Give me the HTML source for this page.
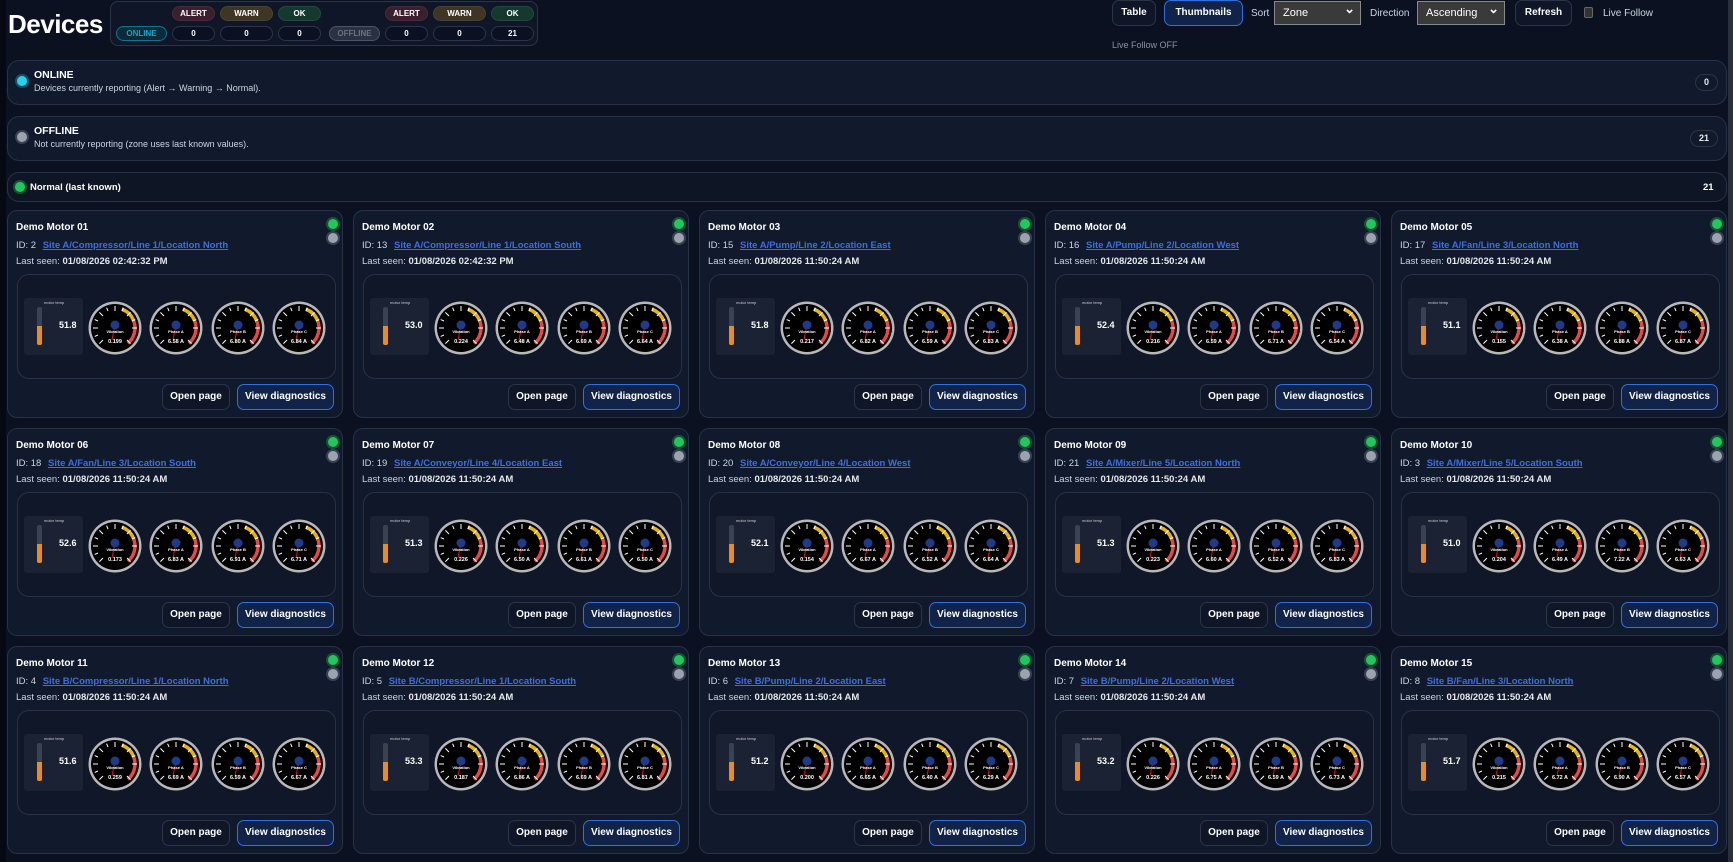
<!DOCTYPE html>
<html><head><meta charset="utf-8"><style>
*{box-sizing:border-box;margin:0;padding:0}
body{width:1733px;height:862px;overflow:hidden;background:#0b1120;font-family:"Liberation Sans",sans-serif;color:#e5e7eb;position:relative}
.ab{position:absolute}
.strip{left:0;top:0;width:6px;height:862px;background:#060912}
.sb{right:0;top:0;width:5px;height:862px;background:#2a2f3a}
h1{position:absolute;left:8px;top:9px;font-size:26px;font-weight:bold;color:#fff;letter-spacing:-0.5px}
.sum{left:110px;top:1px;width:428px;height:45px;border:1px solid #2a3548;border-radius:8px;background:#0f1628}
.pill{position:absolute;height:15px;border-radius:8px;font-size:8px;font-weight:bold;text-align:center;line-height:14px;color:#fff}
.pa{background:#3a1f2c;border:1px solid #4a2a38}.pw{background:#3f3524;border:1px solid #4d4230}.po{background:#16392f;border:1px solid #1f4a3c}
.pn{background:#0b1120;border:1px solid #2a3548}
.btn{position:absolute;border:1px solid #2a3548;border-radius:7px;background:#0f1628;color:#fff;font-size:10px;font-weight:bold;text-align:center}
.btn.hl{border-color:#2f6fe0;background:#12234a}
.sel{position:absolute;height:24px;background:#3a3a3a;border:1px solid #888;color:#fff;font-size:11px;line-height:22px;padding-left:8px}
.sel:after{content:"⌄";position:absolute;right:5px;top:-4px;font-size:13px;font-weight:bold}
.lbl{position:absolute;font-size:10px;color:#cbd5e1}
.panel{position:absolute;left:7px;width:1720px;border:1px solid #263247;border-radius:12px;background:#111a2c}
.dot{position:absolute;border-radius:50%}
.pt{position:absolute;left:34px;font-size:10.5px;font-weight:bold;color:#fff}
.pd{position:absolute;left:34px;font-size:9px;color:#cbd5e1}
.cnt{position:absolute;border:1px solid #2a3548;border-radius:9px;font-size:9px;font-weight:bold;text-align:center;line-height:15px;height:17px}
.card{position:absolute;width:336px;height:208px;border:1px solid #263247;border-radius:10px;background:#111a2c}
.card .t{position:absolute;left:8px;top:11px;font-size:10px;font-weight:bold;color:#fff}
.card .id{position:absolute;left:8px;top:29px;font-size:9.5px;color:#cbd5e1}
.card .id a{color:#3d6fdc;font-weight:bold;text-decoration:underline;margin-left:4px}
.card .ls{position:absolute;left:8px;top:45px;font-size:9.5px;color:#cbd5e1}
.card .ls b{color:#e5e7eb}
.card .g1{position:absolute;left:320px;top:8px;width:10px;height:10px;border-radius:50%;background:#22c55e;box-shadow:0 0 0 2px #14532d}
.card .g2{position:absolute;left:320px;top:22px;width:10px;height:10px;border-radius:50%;background:#9ca3af;box-shadow:0 0 0 2px #374151}
.card .in{position:absolute;left:9px;top:63px;width:319px;height:105px;border:1px solid #263247;border-radius:12px;background:#0f1728}
.card .th{position:absolute;left:6px;top:23px;width:59px;height:57px;background:#1a2234;border-radius:3px}
.card .th i{position:absolute;left:13px;top:9px;width:5px;height:38px;background:#3a4150;border-radius:2px}
.card .th i:after{content:"";position:absolute;left:0;bottom:0;width:5px;height:19px;background:#f08a1c;border-radius:0 0 2px 2px}
.card .th b{position:absolute;left:35px;top:22px;font-size:9px;color:#fff}
.card .th s{position:absolute;left:20px;top:2px;font-size:4px;color:#ccc;text-decoration:none}
.card svg{position:absolute;left:60px;top:23px}
.card .b1{position:absolute;left:154px;top:173px;width:68px;height:26px;line-height:24px}
.card .b2{position:absolute;left:229px;top:173px;width:97px;height:26px;line-height:24px}
</style></head><body>
<svg width="0" height="0" style="position:absolute"><defs>
<g id="gz">
<circle r="26.5" fill="#b8b8b8"/><circle r="24" fill="#000"/>
<path d="M6.8 -18.8A20 20 0 0 1 18.8 -6.8" stroke="#eab308" stroke-width="3.5" fill="none"/>
<path d="M18.8 -6.8A20 20 0 0 1 12.9 15.3" stroke="#ef4444" stroke-width="3.5" fill="none"/>
<g stroke="#fff" stroke-width="1">
<path d="M0 -22V-17M-15.6 15.6L-12 12M15.6 15.6L12 12M-22 0H-17M22 0H17M-15.6 -15.6L-12 -12M15.6 -15.6L12 -12M-8.4 -20.3L-7 -17M8.4 -20.3L7 -17M-20.3 -8.4L-17 -7M20.3 -8.4L17 -7M-20.3 8.4L-17 7"/>
</g>
<line x1="0" y1="-3" x2="-3" y2="12" stroke="#d11" stroke-width="1"/>
<circle cy="-3" r="4.5" fill="#1e3a8a"/>
</g></defs></svg>
<div class="ab strip"></div><div class="ab sb"></div>
<h1>Devices</h1>
<div class="ab sum">
<div class="pill pa" style="left:61px;top:4px;width:43px">ALERT</div>
<div class="pill pw" style="left:109px;top:4px;width:53px">WARN</div>
<div class="pill po" style="left:167px;top:4px;width:43px">OK</div>
<div class="pill pa" style="left:274px;top:4px;width:43px">ALERT</div>
<div class="pill pw" style="left:322px;top:4px;width:53px">WARN</div>
<div class="pill po" style="left:380px;top:4px;width:43px">OK</div>
<div class="pill" style="left:5px;top:24px;width:51px;border:1px solid #0e7490;background:#0c2a3a;color:#0ea5c6">ONLINE</div>
<div class="pill pn" style="left:61px;top:24px;width:43px">0</div>
<div class="pill pn" style="left:109px;top:24px;width:53px">0</div>
<div class="pill pn" style="left:167px;top:24px;width:43px">0</div>
<div class="pill" style="left:218px;top:24px;width:51px;border:1px solid #4b5563;background:#2a3140;color:#6b7280">OFFLINE</div>
<div class="pill pn" style="left:274px;top:24px;width:43px">0</div>
<div class="pill pn" style="left:322px;top:24px;width:53px">0</div>
<div class="pill pn" style="left:380px;top:24px;width:43px">21</div>
</div>
<div class="btn" style="left:1112px;top:0;width:44px;height:26px;line-height:24px">Table</div>
<div class="btn hl" style="left:1164px;top:0;width:79px;height:26px;line-height:24px">Thumbnails</div>
<div class="lbl" style="left:1251px;top:8px">Sort</div>
<div class="sel" style="left:1274px;top:1px;width:87px">Zone</div>
<div class="lbl" style="left:1370px;top:8px">Direction</div>
<div class="sel" style="left:1417px;top:1px;width:88px">Ascending</div>
<div class="btn" style="left:1515px;top:0;width:57px;height:26px;line-height:24px">Refresh</div>
<div class="ab" style="left:1584px;top:7px;width:9px;height:11px;border:1px solid #666;border-radius:2px;background:#333"></div>
<div class="lbl" style="left:1603px;top:8px">Live Follow</div>
<div class="lbl" style="left:1112px;top:40px;font-size:9px;color:#8b93a1">Live Follow OFF</div>

<div class="panel" style="top:60px;height:45px">
<div class="dot" style="left:9px;top:15px;width:10px;height:10px;background:#22d3ee;box-shadow:0 0 0 2px #164e63"></div>
<div class="pt" style="left:26px;top:8px">ONLINE</div>
<div class="pd" style="left:26px;top:22px">Devices currently reporting (Alert → Warning → Normal).</div>
<div class="cnt" style="left:1687px;top:13px;width:23px">0</div>
</div>
<div class="panel" style="top:116px;height:45px">
<div class="dot" style="left:9px;top:15px;width:10px;height:10px;background:#9ca3af;box-shadow:0 0 0 2px #374151"></div>
<div class="pt" style="left:26px;top:8px">OFFLINE</div>
<div class="pd" style="left:26px;top:22px">Not currently reporting (zone uses last known values).</div>
<div class="cnt" style="left:1682px;top:13px;width:28px">21</div>
</div>
<div class="panel" style="top:172px;height:30px;background:#0e1524">
<div class="dot" style="left:7px;top:9px;width:10px;height:10px;background:#22c55e;box-shadow:0 0 0 2px #14532d"></div>
<div class="pt" style="left:22px;top:9px;font-size:9.5px">Normal (last known)</div>
<div class="pt" style="left:1695px;top:9px;font-size:9.5px">21</div>
</div>

<div class="card" style="left:7px;top:210px"><div class="t">Demo Motor 01</div><div class="id">ID: 2 <a>Site A/Compressor/Line 1/Location North</a></div><div class="ls">Last seen: <b>01/08/2026 02:42:32 PM</b></div><i class="g1"></i><i class="g2"></i><div class="in"><div class="th"><s>motor temp</s><i></i><b>51.8</b></div><svg width="250" height="60"><g font-family="Liberation Sans" font-weight="bold" fill="#fff" text-anchor="middle"><use href="#gz" x="37" y="30"/><text x="37" y="35" font-size="4">Vibration</text><text x="37" y="45" font-size="5.5">0.199</text><use href="#gz" x="98" y="30"/><text x="98" y="35" font-size="4">Phase A</text><text x="98" y="45" font-size="5.5">6.58 A</text><use href="#gz" x="160" y="30"/><text x="160" y="35" font-size="4">Phase B</text><text x="160" y="45" font-size="5.5">6.80 A</text><use href="#gz" x="221" y="30"/><text x="221" y="35" font-size="4">Phase C</text><text x="221" y="45" font-size="5.5">6.84 A</text></g></svg></div><span class="btn b1">Open page</span><span class="btn hl b2">View diagnostics</span></div>

<div class="card" style="left:353px;top:210px"><div class="t">Demo Motor 02</div><div class="id">ID: 13 <a>Site A/Compressor/Line 1/Location South</a></div><div class="ls">Last seen: <b>01/08/2026 02:42:32 PM</b></div><i class="g1"></i><i class="g2"></i><div class="in"><div class="th"><s>motor temp</s><i></i><b>53.0</b></div><svg width="250" height="60"><g font-family="Liberation Sans" font-weight="bold" fill="#fff" text-anchor="middle"><use href="#gz" x="37" y="30"/><text x="37" y="35" font-size="4">Vibration</text><text x="37" y="45" font-size="5.5">0.224</text><use href="#gz" x="98" y="30"/><text x="98" y="35" font-size="4">Phase A</text><text x="98" y="45" font-size="5.5">6.48 A</text><use href="#gz" x="160" y="30"/><text x="160" y="35" font-size="4">Phase B</text><text x="160" y="45" font-size="5.5">6.69 A</text><use href="#gz" x="221" y="30"/><text x="221" y="35" font-size="4">Phase C</text><text x="221" y="45" font-size="5.5">6.64 A</text></g></svg></div><span class="btn b1">Open page</span><span class="btn hl b2">View diagnostics</span></div>

<div class="card" style="left:699px;top:210px"><div class="t">Demo Motor 03</div><div class="id">ID: 15 <a>Site A/Pump/Line 2/Location East</a></div><div class="ls">Last seen: <b>01/08/2026 11:50:24 AM</b></div><i class="g1"></i><i class="g2"></i><div class="in"><div class="th"><s>motor temp</s><i></i><b>51.8</b></div><svg width="250" height="60"><g font-family="Liberation Sans" font-weight="bold" fill="#fff" text-anchor="middle"><use href="#gz" x="37" y="30"/><text x="37" y="35" font-size="4">Vibration</text><text x="37" y="45" font-size="5.5">0.217</text><use href="#gz" x="98" y="30"/><text x="98" y="35" font-size="4">Phase A</text><text x="98" y="45" font-size="5.5">6.82 A</text><use href="#gz" x="160" y="30"/><text x="160" y="35" font-size="4">Phase B</text><text x="160" y="45" font-size="5.5">6.59 A</text><use href="#gz" x="221" y="30"/><text x="221" y="35" font-size="4">Phase C</text><text x="221" y="45" font-size="5.5">6.83 A</text></g></svg></div><span class="btn b1">Open page</span><span class="btn hl b2">View diagnostics</span></div>

<div class="card" style="left:1045px;top:210px"><div class="t">Demo Motor 04</div><div class="id">ID: 16 <a>Site A/Pump/Line 2/Location West</a></div><div class="ls">Last seen: <b>01/08/2026 11:50:24 AM</b></div><i class="g1"></i><i class="g2"></i><div class="in"><div class="th"><s>motor temp</s><i></i><b>52.4</b></div><svg width="250" height="60"><g font-family="Liberation Sans" font-weight="bold" fill="#fff" text-anchor="middle"><use href="#gz" x="37" y="30"/><text x="37" y="35" font-size="4">Vibration</text><text x="37" y="45" font-size="5.5">0.216</text><use href="#gz" x="98" y="30"/><text x="98" y="35" font-size="4">Phase A</text><text x="98" y="45" font-size="5.5">6.59 A</text><use href="#gz" x="160" y="30"/><text x="160" y="35" font-size="4">Phase B</text><text x="160" y="45" font-size="5.5">6.71 A</text><use href="#gz" x="221" y="30"/><text x="221" y="35" font-size="4">Phase C</text><text x="221" y="45" font-size="5.5">6.54 A</text></g></svg></div><span class="btn b1">Open page</span><span class="btn hl b2">View diagnostics</span></div>

<div class="card" style="left:1391px;top:210px"><div class="t">Demo Motor 05</div><div class="id">ID: 17 <a>Site A/Fan/Line 3/Location North</a></div><div class="ls">Last seen: <b>01/08/2026 11:50:24 AM</b></div><i class="g1"></i><i class="g2"></i><div class="in"><div class="th"><s>motor temp</s><i></i><b>51.1</b></div><svg width="250" height="60"><g font-family="Liberation Sans" font-weight="bold" fill="#fff" text-anchor="middle"><use href="#gz" x="37" y="30"/><text x="37" y="35" font-size="4">Vibration</text><text x="37" y="45" font-size="5.5">0.155</text><use href="#gz" x="98" y="30"/><text x="98" y="35" font-size="4">Phase A</text><text x="98" y="45" font-size="5.5">6.38 A</text><use href="#gz" x="160" y="30"/><text x="160" y="35" font-size="4">Phase B</text><text x="160" y="45" font-size="5.5">6.88 A</text><use href="#gz" x="221" y="30"/><text x="221" y="35" font-size="4">Phase C</text><text x="221" y="45" font-size="5.5">6.87 A</text></g></svg></div><span class="btn b1">Open page</span><span class="btn hl b2">View diagnostics</span></div>

<div class="card" style="left:7px;top:428px"><div class="t">Demo Motor 06</div><div class="id">ID: 18 <a>Site A/Fan/Line 3/Location South</a></div><div class="ls">Last seen: <b>01/08/2026 11:50:24 AM</b></div><i class="g1"></i><i class="g2"></i><div class="in"><div class="th"><s>motor temp</s><i></i><b>52.6</b></div><svg width="250" height="60"><g font-family="Liberation Sans" font-weight="bold" fill="#fff" text-anchor="middle"><use href="#gz" x="37" y="30"/><text x="37" y="35" font-size="4">Vibration</text><text x="37" y="45" font-size="5.5">0.173</text><use href="#gz" x="98" y="30"/><text x="98" y="35" font-size="4">Phase A</text><text x="98" y="45" font-size="5.5">6.83 A</text><use href="#gz" x="160" y="30"/><text x="160" y="35" font-size="4">Phase B</text><text x="160" y="45" font-size="5.5">6.91 A</text><use href="#gz" x="221" y="30"/><text x="221" y="35" font-size="4">Phase C</text><text x="221" y="45" font-size="5.5">6.71 A</text></g></svg></div><span class="btn b1">Open page</span><span class="btn hl b2">View diagnostics</span></div>

<div class="card" style="left:353px;top:428px"><div class="t">Demo Motor 07</div><div class="id">ID: 19 <a>Site A/Conveyor/Line 4/Location East</a></div><div class="ls">Last seen: <b>01/08/2026 11:50:24 AM</b></div><i class="g1"></i><i class="g2"></i><div class="in"><div class="th"><s>motor temp</s><i></i><b>51.3</b></div><svg width="250" height="60"><g font-family="Liberation Sans" font-weight="bold" fill="#fff" text-anchor="middle"><use href="#gz" x="37" y="30"/><text x="37" y="35" font-size="4">Vibration</text><text x="37" y="45" font-size="5.5">0.226</text><use href="#gz" x="98" y="30"/><text x="98" y="35" font-size="4">Phase A</text><text x="98" y="45" font-size="5.5">6.50 A</text><use href="#gz" x="160" y="30"/><text x="160" y="35" font-size="4">Phase B</text><text x="160" y="45" font-size="5.5">6.61 A</text><use href="#gz" x="221" y="30"/><text x="221" y="35" font-size="4">Phase C</text><text x="221" y="45" font-size="5.5">6.50 A</text></g></svg></div><span class="btn b1">Open page</span><span class="btn hl b2">View diagnostics</span></div>

<div class="card" style="left:699px;top:428px"><div class="t">Demo Motor 08</div><div class="id">ID: 20 <a>Site A/Conveyor/Line 4/Location West</a></div><div class="ls">Last seen: <b>01/08/2026 11:50:24 AM</b></div><i class="g1"></i><i class="g2"></i><div class="in"><div class="th"><s>motor temp</s><i></i><b>52.1</b></div><svg width="250" height="60"><g font-family="Liberation Sans" font-weight="bold" fill="#fff" text-anchor="middle"><use href="#gz" x="37" y="30"/><text x="37" y="35" font-size="4">Vibration</text><text x="37" y="45" font-size="5.5">0.154</text><use href="#gz" x="98" y="30"/><text x="98" y="35" font-size="4">Phase A</text><text x="98" y="45" font-size="5.5">6.67 A</text><use href="#gz" x="160" y="30"/><text x="160" y="35" font-size="4">Phase B</text><text x="160" y="45" font-size="5.5">6.52 A</text><use href="#gz" x="221" y="30"/><text x="221" y="35" font-size="4">Phase C</text><text x="221" y="45" font-size="5.5">6.64 A</text></g></svg></div><span class="btn b1">Open page</span><span class="btn hl b2">View diagnostics</span></div>

<div class="card" style="left:1045px;top:428px"><div class="t">Demo Motor 09</div><div class="id">ID: 21 <a>Site A/Mixer/Line 5/Location North</a></div><div class="ls">Last seen: <b>01/08/2026 11:50:24 AM</b></div><i class="g1"></i><i class="g2"></i><div class="in"><div class="th"><s>motor temp</s><i></i><b>51.3</b></div><svg width="250" height="60"><g font-family="Liberation Sans" font-weight="bold" fill="#fff" text-anchor="middle"><use href="#gz" x="37" y="30"/><text x="37" y="35" font-size="4">Vibration</text><text x="37" y="45" font-size="5.5">0.223</text><use href="#gz" x="98" y="30"/><text x="98" y="35" font-size="4">Phase A</text><text x="98" y="45" font-size="5.5">6.60 A</text><use href="#gz" x="160" y="30"/><text x="160" y="35" font-size="4">Phase B</text><text x="160" y="45" font-size="5.5">6.52 A</text><use href="#gz" x="221" y="30"/><text x="221" y="35" font-size="4">Phase C</text><text x="221" y="45" font-size="5.5">6.83 A</text></g></svg></div><span class="btn b1">Open page</span><span class="btn hl b2">View diagnostics</span></div>

<div class="card" style="left:1391px;top:428px"><div class="t">Demo Motor 10</div><div class="id">ID: 3 <a>Site A/Mixer/Line 5/Location South</a></div><div class="ls">Last seen: <b>01/08/2026 11:50:24 AM</b></div><i class="g1"></i><i class="g2"></i><div class="in"><div class="th"><s>motor temp</s><i></i><b>51.0</b></div><svg width="250" height="60"><g font-family="Liberation Sans" font-weight="bold" fill="#fff" text-anchor="middle"><use href="#gz" x="37" y="30"/><text x="37" y="35" font-size="4">Vibration</text><text x="37" y="45" font-size="5.5">0.204</text><use href="#gz" x="98" y="30"/><text x="98" y="35" font-size="4">Phase A</text><text x="98" y="45" font-size="5.5">6.49 A</text><use href="#gz" x="160" y="30"/><text x="160" y="35" font-size="4">Phase B</text><text x="160" y="45" font-size="5.5">7.22 A</text><use href="#gz" x="221" y="30"/><text x="221" y="35" font-size="4">Phase C</text><text x="221" y="45" font-size="5.5">6.63 A</text></g></svg></div><span class="btn b1">Open page</span><span class="btn hl b2">View diagnostics</span></div>

<div class="card" style="left:7px;top:646px"><div class="t">Demo Motor 11</div><div class="id">ID: 4 <a>Site B/Compressor/Line 1/Location North</a></div><div class="ls">Last seen: <b>01/08/2026 11:50:24 AM</b></div><i class="g1"></i><i class="g2"></i><div class="in"><div class="th"><s>motor temp</s><i></i><b>51.6</b></div><svg width="250" height="60"><g font-family="Liberation Sans" font-weight="bold" fill="#fff" text-anchor="middle"><use href="#gz" x="37" y="30"/><text x="37" y="35" font-size="4">Vibration</text><text x="37" y="45" font-size="5.5">0.259</text><use href="#gz" x="98" y="30"/><text x="98" y="35" font-size="4">Phase A</text><text x="98" y="45" font-size="5.5">6.69 A</text><use href="#gz" x="160" y="30"/><text x="160" y="35" font-size="4">Phase B</text><text x="160" y="45" font-size="5.5">6.59 A</text><use href="#gz" x="221" y="30"/><text x="221" y="35" font-size="4">Phase C</text><text x="221" y="45" font-size="5.5">6.67 A</text></g></svg></div><span class="btn b1">Open page</span><span class="btn hl b2">View diagnostics</span></div>

<div class="card" style="left:353px;top:646px"><div class="t">Demo Motor 12</div><div class="id">ID: 5 <a>Site B/Compressor/Line 1/Location South</a></div><div class="ls">Last seen: <b>01/08/2026 11:50:24 AM</b></div><i class="g1"></i><i class="g2"></i><div class="in"><div class="th"><s>motor temp</s><i></i><b>53.3</b></div><svg width="250" height="60"><g font-family="Liberation Sans" font-weight="bold" fill="#fff" text-anchor="middle"><use href="#gz" x="37" y="30"/><text x="37" y="35" font-size="4">Vibration</text><text x="37" y="45" font-size="5.5">0.187</text><use href="#gz" x="98" y="30"/><text x="98" y="35" font-size="4">Phase A</text><text x="98" y="45" font-size="5.5">6.86 A</text><use href="#gz" x="160" y="30"/><text x="160" y="35" font-size="4">Phase B</text><text x="160" y="45" font-size="5.5">6.69 A</text><use href="#gz" x="221" y="30"/><text x="221" y="35" font-size="4">Phase C</text><text x="221" y="45" font-size="5.5">6.81 A</text></g></svg></div><span class="btn b1">Open page</span><span class="btn hl b2">View diagnostics</span></div>

<div class="card" style="left:699px;top:646px"><div class="t">Demo Motor 13</div><div class="id">ID: 6 <a>Site B/Pump/Line 2/Location East</a></div><div class="ls">Last seen: <b>01/08/2026 11:50:24 AM</b></div><i class="g1"></i><i class="g2"></i><div class="in"><div class="th"><s>motor temp</s><i></i><b>51.2</b></div><svg width="250" height="60"><g font-family="Liberation Sans" font-weight="bold" fill="#fff" text-anchor="middle"><use href="#gz" x="37" y="30"/><text x="37" y="35" font-size="4">Vibration</text><text x="37" y="45" font-size="5.5">0.200</text><use href="#gz" x="98" y="30"/><text x="98" y="35" font-size="4">Phase A</text><text x="98" y="45" font-size="5.5">6.65 A</text><use href="#gz" x="160" y="30"/><text x="160" y="35" font-size="4">Phase B</text><text x="160" y="45" font-size="5.5">6.40 A</text><use href="#gz" x="221" y="30"/><text x="221" y="35" font-size="4">Phase C</text><text x="221" y="45" font-size="5.5">6.29 A</text></g></svg></div><span class="btn b1">Open page</span><span class="btn hl b2">View diagnostics</span></div>

<div class="card" style="left:1045px;top:646px"><div class="t">Demo Motor 14</div><div class="id">ID: 7 <a>Site B/Pump/Line 2/Location West</a></div><div class="ls">Last seen: <b>01/08/2026 11:50:24 AM</b></div><i class="g1"></i><i class="g2"></i><div class="in"><div class="th"><s>motor temp</s><i></i><b>53.2</b></div><svg width="250" height="60"><g font-family="Liberation Sans" font-weight="bold" fill="#fff" text-anchor="middle"><use href="#gz" x="37" y="30"/><text x="37" y="35" font-size="4">Vibration</text><text x="37" y="45" font-size="5.5">0.226</text><use href="#gz" x="98" y="30"/><text x="98" y="35" font-size="4">Phase A</text><text x="98" y="45" font-size="5.5">6.75 A</text><use href="#gz" x="160" y="30"/><text x="160" y="35" font-size="4">Phase B</text><text x="160" y="45" font-size="5.5">6.59 A</text><use href="#gz" x="221" y="30"/><text x="221" y="35" font-size="4">Phase C</text><text x="221" y="45" font-size="5.5">6.73 A</text></g></svg></div><span class="btn b1">Open page</span><span class="btn hl b2">View diagnostics</span></div>

<div class="card" style="left:1391px;top:646px"><div class="t">Demo Motor 15</div><div class="id">ID: 8 <a>Site B/Fan/Line 3/Location North</a></div><div class="ls">Last seen: <b>01/08/2026 11:50:24 AM</b></div><i class="g1"></i><i class="g2"></i><div class="in"><div class="th"><s>motor temp</s><i></i><b>51.7</b></div><svg width="250" height="60"><g font-family="Liberation Sans" font-weight="bold" fill="#fff" text-anchor="middle"><use href="#gz" x="37" y="30"/><text x="37" y="35" font-size="4">Vibration</text><text x="37" y="45" font-size="5.5">0.215</text><use href="#gz" x="98" y="30"/><text x="98" y="35" font-size="4">Phase A</text><text x="98" y="45" font-size="5.5">6.72 A</text><use href="#gz" x="160" y="30"/><text x="160" y="35" font-size="4">Phase B</text><text x="160" y="45" font-size="5.5">6.90 A</text><use href="#gz" x="221" y="30"/><text x="221" y="35" font-size="4">Phase C</text><text x="221" y="45" font-size="5.5">6.57 A</text></g></svg></div><span class="btn b1">Open page</span><span class="btn hl b2">View diagnostics</span></div>
</body></html>
